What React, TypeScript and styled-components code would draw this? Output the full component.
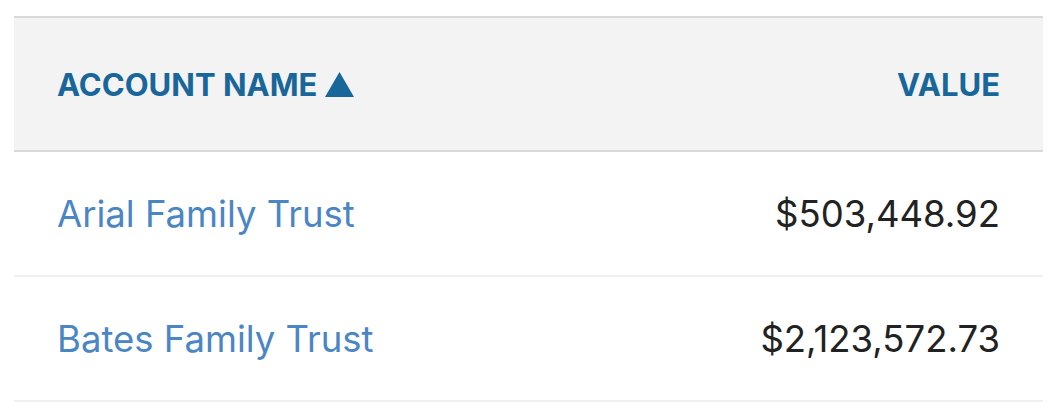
import React from "react";
import styled, { createGlobalStyle } from "styled-components";

const GlobalStyle = createGlobalStyle`
  body {
    margin: 0;
    background: #fff;
    font-family: Inter, "Noto Sans", sans-serif;
  }
`;

const Page = styled.div`
  padding: 16px 17px 0 14px;
`;

const Table = styled.table`
  width: 100%;
  border-collapse: collapse;
`;

const HeadRow = styled.tr`
  background: #f3f3f3;
  border-top: 2px solid #d9d9d9;
  border-bottom: 2px solid #d9d9d9;
`;

const Th = styled.th<{ $align?: "left" | "right" }>`
  height: 132px;
  padding: 0 43px;
  text-align: ${(p) => p.$align || "left"};
  color: #19669a;
  font-size: 31px;
  font-weight: 700;
  white-space: nowrap;
`;

const SortIcon = styled.svg`
  width: 29px;
  height: 25px;
  margin-left: 8px;
  vertical-align: -1px;
`;

const Row = styled.tr`
  border-bottom: 2px solid #f0f0f0;
`;

const Td = styled.td<{ $align?: "left" | "right" }>`
  height: 123px;
  padding: 0 43px;
  text-align: ${(p) => p.$align || "left"};
  font-size: 36.5px;
  color: #222;
`;

const AccountLink = styled.a`
  color: #4a86c4;
  text-decoration: none;
`;

const accounts = [
  { name: "Arial Family Trust", value: "$503,448.92" },
  { name: "Bates Family Trust", value: "$2,123,572.73" },
];

export default function App() {
  return (
    <Page>
      <GlobalStyle />
      <Table>
        <thead>
          <HeadRow>
            <Th>
              ACCOUNT NAME
              <SortIcon viewBox="0 0 29 25">
                <polygon points="14.5,0 29,25 0,25" fill="#19669a" />
              </SortIcon>
            </Th>
            <Th $align="right">VALUE</Th>
          </HeadRow>
        </thead>
        <tbody>
          {accounts.map((a) => (
            <Row key={a.name}>
              <Td>
                <AccountLink href="#">{a.name}</AccountLink>
              </Td>
              <Td $align="right">{a.value}</Td>
            </Row>
          ))}
        </tbody>
      </Table>
    </Page>
  );
}
